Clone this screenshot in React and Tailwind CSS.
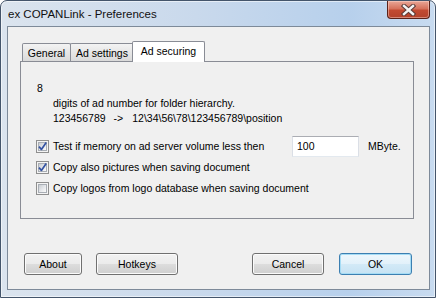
import React from 'react';

function CheckBox({ checked }) {
    return (
        <span className="relative w-[13px] h-[13px] shrink-0 border border-[#8f8f8f] bg-[#f4f4f4] p-px flex">
            <span className="flex-1 border border-[#a9aeb5] bg-[linear-gradient(135deg,#c8ccd2,#e6e8eb_55%,#fbfbfb)]" />
            {checked && (
                <svg className="absolute left-0 top-0" width="11" height="11" viewBox="0 0 11 11">
                    <path d="M2 5.6 L4.4 8.4 L9.2 1.6" fill="none" stroke="#3453a3" strokeWidth="1.7" strokeLinejoin="round" />
                </svg>
            )}
        </span>
    );
}

function Button({ children, className, primary }) {
    return (
        <button
            className={
                primary
                    ? `h-[22px] rounded-[3px] border border-[#3c7fb1] bg-[linear-gradient(#eef7fc,#e2f1fa_50%,#d3eaf7_50%,#c6e2f3)] shadow-[inset_0_0_0_1px_#a5dcf5] text-[10.5px] leading-[12px] text-black ${className}`
                    : `h-[22px] rounded-[3px] border border-[#707070] bg-[linear-gradient(#f2f2f2,#ebebeb_50%,#dddddd_50%,#cfcfcf)] shadow-[inset_0_0_0_1px_#fbfbfb] text-[10.5px] leading-[12px] text-black ${className}`
            }
        >
            {children}
        </button>
    );
}

export default function App() {
    return (
        <div className="w-[436px] h-[298px] overflow-hidden bg-white">
            <div className="w-[436px] h-[298px] flex flex-col rounded-t-[7px] border border-[#44556b] bg-[linear-gradient(90deg,#dbe4ee,#c9d9ec_45%,#b7d0ec_80%,#c8dbf0)] shadow-[inset_0_0_0_1px_rgba(255,255,255,0.55)] font-['Liberation_Sans',Arial,sans-serif] text-black">
                {/* Title bar */}
                <div className="h-[25px] flex items-start justify-between pl-[7px] pr-[5px]">
                    <span className="mt-[6px] text-[11.5px] leading-[14px] text-[#111]">ex COPANLink - Preferences</span>
                    <div className="w-[43px] h-[18px] rounded-b-[4px] border border-t-0 border-[#5a2219] bg-[linear-gradient(#e9a797,#d6725c_45%,#c24a31_55%,#b3422b)] shadow-[inset_0_0_0_1px_rgba(255,220,210,0.45)] flex items-center justify-center">
                        <svg width="15" height="12" viewBox="0 0 15 12">
                            <path d="M3 2 L12 10 M12 2 L3 10" stroke="#5a3a36" strokeWidth="4.4" strokeLinecap="square" />
                            <path d="M3 2 L12 10 M12 2 L3 10" stroke="#f4f4f4" strokeWidth="2.4" strokeLinecap="square" />
                        </svg>
                    </div>
                </div>

                {/* Client area */}
                <div className="ml-[6px] w-[423px] h-[264px] border border-[#7d8a99] bg-[#f0f0f0] pl-[12px] pt-[14px] flex flex-col">
                    {/* Tabs */}
                    <div className="h-[20px] flex items-start pl-[2px] relative z-10 text-[10.5px] leading-[12px]">
                        <div className="mt-[2px] h-[18px] w-[49px] rounded-t-[2px] border border-b-0 border-[#898c95] bg-[linear-gradient(#f3f3f3,#e6e6e6_50%,#dadada)] flex items-center justify-center pt-px">
                            General
                        </div>
                        <div className="-ml-px mt-[2px] h-[18px] w-[64px] rounded-t-[2px] border border-b-0 border-[#898c95] bg-[linear-gradient(#f3f3f3,#e6e6e6_50%,#dadada)] flex items-center justify-center pt-px">
                            Ad settings
                        </div>
                        <div className="-ml-[2px] h-[21px] w-[73px] rounded-t-[2px] border border-b-0 border-[#898c95] bg-white flex items-center justify-center pb-[2px]">
                            Ad securing
                        </div>
                    </div>

                    {/* Tab panel */}
                    <div className="w-[394px] h-[158px] border border-[#898c95] bg-[#f0f0f0] pl-[15px] pt-[19px] flex flex-col text-[10.5px]">
                        <div className="pl-px leading-[15px]">8</div>
                        <div className="pl-[17px] leading-[15px]">digits of ad number for folder hierarchy.</div>
                        <div className="pl-[17px] leading-[15px] flex">
                            <span>123456789</span>
                            <span className="ml-[8px]">-&gt;</span>
                            <span className="ml-[9px]">{'12\\34\\56\\78\\123456789\\position'}</span>
                        </div>

                        <div className="mt-[10px] h-[21px] flex items-center gap-[4px]">
                            <CheckBox checked />
                            <span className="w-[235px]">Test if memory on ad server volume less then</span>
                            <div className="w-[67px] h-[21px] border border-[#abadb3] border-b-[#e3e9ef] border-x-[#dbdfe6] bg-white flex items-center pl-[4px]">
                                100
                            </div>
                            <span className="ml-[5px]">MByte.</span>
                        </div>
                        <div className="h-[21px] flex items-center gap-[4px]">
                            <CheckBox checked />
                            <span>Copy also pictures when saving document</span>
                        </div>
                        <div className="h-[21px] flex items-center gap-[4px]">
                            <CheckBox />
                            <span>Copy logos from logo database when saving document</span>
                        </div>
                    </div>

                    {/* Buttons */}
                    <div className="mt-[34px] flex">
                        <Button className="ml-[4px] w-[58px]">About</Button>
                        <Button className="ml-[14px] w-[82px]">Hotkeys</Button>
                        <Button className="ml-[74px] w-[72px]">Cancel</Button>
                        <Button primary className="ml-[15px] w-[73px]">OK</Button>
                    </div>
                </div>
            </div>
        </div>
    );
}
